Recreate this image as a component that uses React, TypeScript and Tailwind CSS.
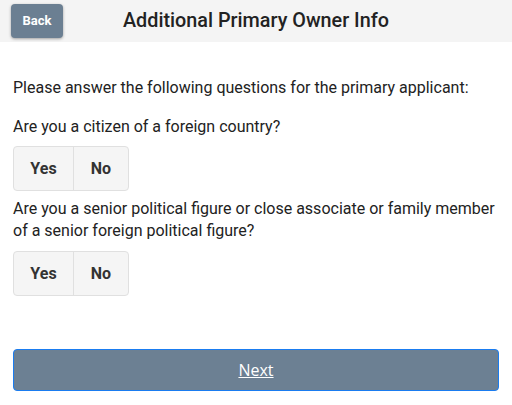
import React from 'react';

const YesNo: React.FC = () => (
  <div className="inline-flex h-[45px] rounded-[4px] border border-[#e0e0e0] bg-[#f5f5f5] text-[16px] font-bold text-[#333]">
    <button className="w-[60px] border-r border-[#e0e0e0]">Yes</button>
    <button className="w-[54px]">No</button>
  </div>
);

export default function App() {
  return (
    <div className="w-[512px] h-[405px] bg-white font-['Roboto',sans-serif] text-[#222]">
      <div className="flex h-[42px] items-center bg-[#f4f4f4] px-[11px]">
        <button className="h-[34px] w-[52px] rounded-[4px] bg-[#6b7f92] text-[13px] font-bold text-white shadow-[0_1px_3px_rgba(0,0,0,0.35)]">
          Back
        </button>
        <h1 className="ml-[60px] text-[19.8px] font-medium text-[#222]">Additional Primary Owner Info</h1>
      </div>
      <div className="px-[13px]">
        <p className="mt-[35px] text-[16px] leading-[22px]">Please answer the following questions for the primary applicant:</p>
        <p className="mt-[17px] text-[16px] leading-[22px]">Are you a citizen of a foreign country?</p>
        <div className="mt-[8px]">
          <YesNo />
        </div>
        <p className="mt-[7px] text-[16px] leading-[22px]">
          Are you a senior political figure or close associate or family member of a senior foreign political figure?
        </p>
        <div className="mt-[9px]">
          <YesNo />
        </div>
        <button className="mt-[53px] h-[42px] w-[486px] rounded-[4px] border border-[#1a7cf0] bg-[#6c8093] font-['Open_Sans',sans-serif] text-[16px] font-medium text-white underline">
          Next
        </button>
      </div>
    </div>
  );
}
